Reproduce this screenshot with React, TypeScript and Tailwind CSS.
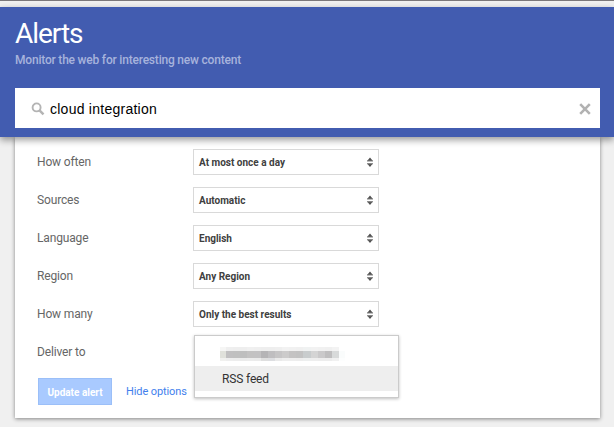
const options = [
  ['How often', 'At most once a day'],
  ['Sources', 'Automatic'],
  ['Language', 'English'],
  ['Region', 'Any Region'],
  ['How many', 'Only the best results'],
];

const mosaic = [
  ['#f6f6f5', '#e0e1db', '#f1f1ef', 6],
  ['#efefef', '#c1c0c1', '#eeeeee', 7],
  ['#eeeeee', '#c0c0c0', '#ededed', 7],
  ['#eeeeee', '#bebebe', '#ebebeb', 7],
  ['#f0f0f0', '#c3c2c2', '#ececec', 7],
  ['#efefef', '#c3c2c3', '#ebebeb', 7],
  ['#eeeeee', '#b5b4b6', '#dfdfdf', 7],
  ['#eeeeee', '#bfbec0', '#dddee1', 7],
  ['#efefef', '#c6c5c6', '#eaeaea', 7],
  ['#f2f2f2', '#cccbcb', '#eeeeee', 7],
  ['#f1f1f1', '#c4c3c3', '#eeeeee', 7],
  ['#f0f0f0', '#c2c2c2', '#ededed', 7],
  ['#f0f2f2', '#c8cccd', '#edefef', 8],
  ['#f2f2f2', '#d4d4d4', '#eeeeee', 7],
  ['#f1f1f1', '#cac9ca', '#ededed', 7],
  ['#f0f0f0', '#bfbebf', '#ededed', 7],
  ['#f3f3f3', '#d8dada', '#f1f1f1', 7],
  ['#ffffff', '#fafcfc', '#fdfefe', 6],
] as const;

function Arrows() {
  return (
    <svg width="8" height="10" viewBox="0 0 8 10">
      <path d="M4 0.6 6.9 4H1.1zM4 9.9 6.9 6.5H1.1z" fill="#505050" />
      <path d="M1 3.4h6v1H1zM1 6.2h6v1H1z" fill="#808080" />
    </svg>
  );
}

export default function App() {
  return (
    <div className="h-[427px] w-[614px] overflow-hidden border-t border-[#7b787b] bg-[#f0f0f0] pt-1.5 font-['Roboto',sans-serif]">
      <header className="relative h-[130px] bg-[#425cb0] px-[15px] pt-2.5 shadow-[0_3px_7px_rgba(0,0,0,0.4)]">
        <h1 className="h-[35px] text-[28px] leading-[34px] tracking-[-1.05px] text-white">Alerts</h1>
        <p className="h-9 text-[12px] leading-4 font-medium tracking-[-0.2px] text-[#a7b3dc]">Monitor the web for interesting new content</p>
        <div className="flex h-10 w-[585px] items-center bg-white pr-[9px] pl-4">
          <svg width="14" height="14" viewBox="0 0 14 14" fill="none" stroke="#b4b4b4" className="mt-0.5">
            <circle cx="5.6" cy="5.4" r="4" strokeWidth="1.9" />
            <path d="m8.5 8.4 4 4" strokeWidth="2.4" />
          </svg>
          <span className="ml-[5px] flex-1 pt-0.5 font-['Liberation_Sans',Arial,sans-serif] text-[14px] tracking-[0.25px] text-black">cloud integration</span>
          <svg width="12" height="12" viewBox="0 0 12 12" stroke="#b2b2b2" strokeWidth="2.6" className="mt-0.5">
            <path d="m1.2 1.2 9.6 9.6M10.8 1.2l-9.6 9.6" />
          </svg>
        </div>
      </header>
      <main className="ml-[15px] h-[281px] w-[585px] bg-white pt-3 pl-[22px] shadow-[0_1px_4px_rgba(0,0,0,0.45)]">
        <div className="flex flex-col gap-3">
          {options.map(([label, value]) => (
            <div key={label} className="flex h-[26px] items-center">
              <span className="w-[156px] text-[12px] tracking-[-0.15px] text-[#666]">{label}</span>
              <button className="flex h-[26px] w-[186px] items-center justify-between border border-[#d9d9d9] bg-white pr-[4px] pl-[5px] text-[10px] font-bold text-[#404040]">
                <span>{value}</span>
                <Arrows />
              </button>
            </div>
          ))}
          <div className="relative h-[26px] text-[12px] leading-[26px] tracking-[-0.15px] text-[#666]">
            Deliver to
            <div className="absolute -top-1 left-[157px] h-[63px] w-[205px] border border-[#cbcbcb] bg-white shadow-[0_1px_3px_rgba(0,0,0,0.25)]">
              <div className="flex h-[30px] pt-[11px] pl-[25px]">
                {mosaic.map(([top, mid, bottom, width], i) => (
                  <span key={i} className="flex flex-col" style={{ width }}>
                    <span className="h-1" style={{ background: top }} />
                    <span className="h-[7px]" style={{ background: mid }} />
                    <span className="h-[3px]" style={{ background: bottom }} />
                  </span>
                ))}
              </div>
              <div className="h-[25px] bg-[#eeeeee] pl-[27px] text-[12px] leading-[26px] text-[#333]">RSS feed</div>
            </div>
          </div>
        </div>
        <div className="mt-[13px] ml-px flex items-center gap-3.5">
          <button className="h-[27px] w-[74px] border border-[#9bbff8] bg-[#a9caff] pt-px text-[10px] font-bold whitespace-nowrap text-white">Update alert</button>
          <a className="pt-0.5 text-[11px] tracking-[-0.1px] text-[#427fed]">Hide options</a>
        </div>
      </main>
    </div>
  );
}
